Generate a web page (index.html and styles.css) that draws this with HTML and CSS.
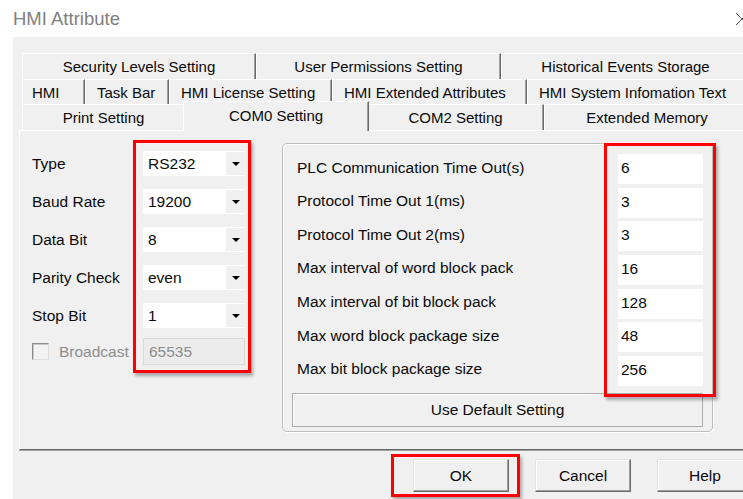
FILE: index.html
```html
<!DOCTYPE html>
<html lang="en">
<head>
<meta charset="utf-8">
<title>HMI Attribute</title>
<link rel="stylesheet" href="styles.css">
</head>
<body>
<div class="window">
  <header class="titlebar">
    <span class="title">HMI Attribute</span>
    <svg class="close" width="14" height="14" viewBox="0 0 14 14" aria-hidden="true">
      <path d="M1 1L13 13M13 1L1 13" stroke="#555" stroke-width="1" fill="none"/>
    </svg>
  </header>

  <div class="dialog">
    <nav class="tabs">
      <div class="tabrow tabrow-1">
        <div class="tab">Security Levels Setting</div>
        <div class="tab">User Permissions Setting</div>
        <div class="tab">Historical Events Storage</div>
      </div>
      <div class="tabrow tabrow-2">
        <div class="tab">HMI</div>
        <div class="tab">Task Bar</div>
        <div class="tab">HMI License Setting</div>
        <div class="tab">HMI Extended Attributes</div>
        <div class="tab">HMI System Infomation Text</div>
      </div>
      <div class="tabrow tabrow-3">
        <div class="tab">Print Setting</div>
        <div class="tab active">COM0 Setting</div>
        <div class="tab">COM2 Setting</div>
        <div class="tab">Extended Memory</div>
      </div>
    </nav>

    <section class="panel">
      <div class="serial">
        <div class="serial-labels">
          <div>Type</div>
          <div>Baud Rate</div>
          <div>Data Bit</div>
          <div>Parity Check</div>
          <div>Stop Bit</div>
          <div class="broadcast"><span class="check"></span><span class="disabled-text">Broadcast</span></div>
        </div>
        <div class="serial-fields">
          <div class="combo"><span class="combo-value">RS232</span><span class="combo-arrow"></span></div>
          <div class="combo"><span class="combo-value">19200</span><span class="combo-arrow"></span></div>
          <div class="combo"><span class="combo-value">8</span><span class="combo-arrow"></span></div>
          <div class="combo"><span class="combo-value">even</span><span class="combo-arrow"></span></div>
          <div class="combo"><span class="combo-value">1</span><span class="combo-arrow"></span></div>
          <div class="field-disabled">65535</div>
        </div>
      </div>

      <div class="group">
        <div class="params">
          <div class="param-label">PLC Communication Time Out(s)</div>
          <div class="param-input">6</div>
          <div class="param-label">Protocol Time Out 1(ms)</div>
          <div class="param-input">3</div>
          <div class="param-label">Protocol Time Out 2(ms)</div>
          <div class="param-input">3</div>
          <div class="param-label">Max interval of word block pack</div>
          <div class="param-input">16</div>
          <div class="param-label">Max interval of bit block pack</div>
          <div class="param-input">128</div>
          <div class="param-label">Max word block package size</div>
          <div class="param-input">48</div>
          <div class="param-label">Max bit block package size</div>
          <div class="param-input">256</div>
        </div>
        <div class="default-btn">Use Default Setting</div>
        <div class="mark mark-params"></div>
      </div>
    </section>

    <footer class="buttons">
      <div class="btn">OK</div>
      <div class="btn">Cancel</div>
      <div class="btn">Help</div>
      <div class="mark mark-ok"></div>
    </footer>
  </div>
</div>
</body>
</html>
```

FILE: styles.css
```css
* { box-sizing: border-box; }

body {
  margin: 0;
  background: #fff;
  font-family: "Liberation Sans", Arial, sans-serif;
  color: #0a0a0a;
}

.window {
  position: relative;
  width: 743px;
  height: 499px;
  overflow: hidden;
  background: #fff;
}

/* title bar */
.titlebar {
  display: flex;
  align-items: center;
  height: 37px;
  padding-left: 13px;
}
.title {
  font-size: 18.5px;
  color: #808080;
}
.close {
  margin-left: auto;
  margin-right: -6px;
  flex: none;
}

/* dialog body */
.dialog {
  margin-left: 13px;
  height: 462px;
  padding-left: 6px;
  background: #f0f0f0;
}

/* tab strip, three stacked rows */
.tabs {
  padding-top: 16px;
  padding-left: 3px;
  font-size: 15px;
}
.tabrow { display: grid; }
.tabrow-1 { height: 26px; grid-template-columns: 234px 245px 249px; }
.tabrow-2 { height: 25px; grid-template-columns: 63px 84px 163px 195px 240px; }
.tabrow-3 { height: 26px; grid-template-columns: 163px 182px 177px 206px; }

.tab {
  display: flex;
  align-items: center;
  justify-content: center;
  white-space: nowrap;
  background: #f0f0f0;
  border-top: 1px solid #fff;
  border-left: 1px solid #fff;
  border-right: 1px solid #696969;
  box-shadow: inset -1px 0 #a0a0a0;
}
.tabrow-2 .tab {
  justify-content: flex-start;
  padding-left: 11px;
}
.tabrow-2 .tab:first-child { padding-left: 9px; }

.tab.active {
  position: relative;
  z-index: 1;
  margin: -3px -2px -1px -2px;
  padding-bottom: 2px;
}

/* tab page */
.panel {
  display: flex;
  align-items: flex-start;
  height: 320px;
  padding: 9px 0 0 12px;
  border-top: 1px solid #fff;
  border-left: 1px solid #fff;
  border-bottom: 1px solid #696969;
  box-shadow: 0 1px 0 #a0a0a0;
  font-size: 15.5px;
}

/* serial port column */
.serial { display: flex; }
.serial-labels {
  width: 101px;
  display: flex;
  flex-direction: column;
  gap: 13px;
  padding-top: 11px;
}
.serial-labels > div {
  height: 25px;
  display: flex;
  align-items: center;
  white-space: nowrap;
}
.serial-labels > .broadcast {
  height: 27px;
  margin-top: -3px;
}
.check {
  width: 17px;
  height: 17px;
  margin-right: 10px;
  border: 1px solid;
  border-color: #8c8c8c #dedede #dedede #8c8c8c;
  box-shadow: inset 1px 1px #c8c8c8;
  background: #f3f3f3;
}
.disabled-text { color: #8d8d8d; }

.serial-fields {
  display: flex;
  flex-direction: column;
  gap: 13px;
  padding: 8px 3px 5px 7px;
  border: 3px solid #ff0000;
  box-shadow: 2px 3px 3px rgba(0, 0, 0, 0.3);
}
.combo {
  display: flex;
  width: 102px;
  height: 25px;
  background: #fff;
}
.combo-value {
  flex: 1;
  display: flex;
  align-items: center;
  padding-left: 5px;
}
.combo-arrow {
  width: 19px;
  margin: 1px 0;
  background: #f0f0f0;
  display: flex;
  align-items: center;
  justify-content: center;
}
.combo-arrow::before {
  content: "";
  border-left: 4px solid transparent;
  border-right: 4px solid transparent;
  border-top: 4px solid #000;
}
.field-disabled {
  width: 102px;
  height: 27px;
  margin-top: -3px;
  display: flex;
  align-items: center;
  padding-left: 5px;
  background: #ececec;
  border: 1px solid #dadada;
  color: #8d8d8d;
}

/* timing parameters group */
.group {
  position: relative;
  display: flex;
  flex-direction: column;
  width: 431px;
  height: 289px;
  margin: 3px 0 0 31px;
  padding: 10px 9px 4px 9px;
  border: 1px solid #bdbdbd;
  border-radius: 5px;
  box-shadow: inset 1px 1px #fff, 1px 1px #fff;
}
.params {
  display: grid;
  grid-template-columns: 1fr 85px;
  row-gap: 3.67px;
}
.param-label {
  height: 30px;
  display: flex;
  align-items: center;
  padding-left: 5px;
  padding-bottom: 3px;
  white-space: nowrap;
}
.param-input {
  height: 30px;
  display: flex;
  align-items: center;
  padding-left: 3px;
  padding-bottom: 2px;
  background: #fff;
}
.default-btn {
  margin-top: 7px;
  height: 34px;
  display: flex;
  align-items: center;
  justify-content: center;
  border: 1px solid #adadad;
  box-shadow: inset 1px 1px #fff;
  background: #f0f0f0;
}

/* dialog buttons */
.buttons {
  position: relative;
  display: flex;
  gap: 26px;
  padding: 9px 0 0 394px;
  font-size: 15.5px;
}
.btn {
  flex: none;
  width: 96px;
  height: 33px;
  display: flex;
  align-items: center;
  justify-content: center;
  background: #f0f0f0;
  border-top: 1px solid #e3e3e3;
  border-left: 1px solid #e3e3e3;
  border-right: 1px solid #696969;
  border-bottom: 1px solid #696969;
  box-shadow: inset -1px -1px #a0a0a0, inset 1px 1px #fff;
}

/* red highlight frames drawn over the form */
.mark {
  position: absolute;
  border: 3px solid #ff0000;
  box-shadow: 2px 3px 3px rgba(0, 0, 0, 0.3);
  pointer-events: none;
}
.mark-params {
  left: 321px;
  top: -1px;
  width: 112px;
  height: 254px;
}
.mark-ok {
  left: 372px;
  top: 4px;
  width: 129px;
  height: 43px;
}
```
